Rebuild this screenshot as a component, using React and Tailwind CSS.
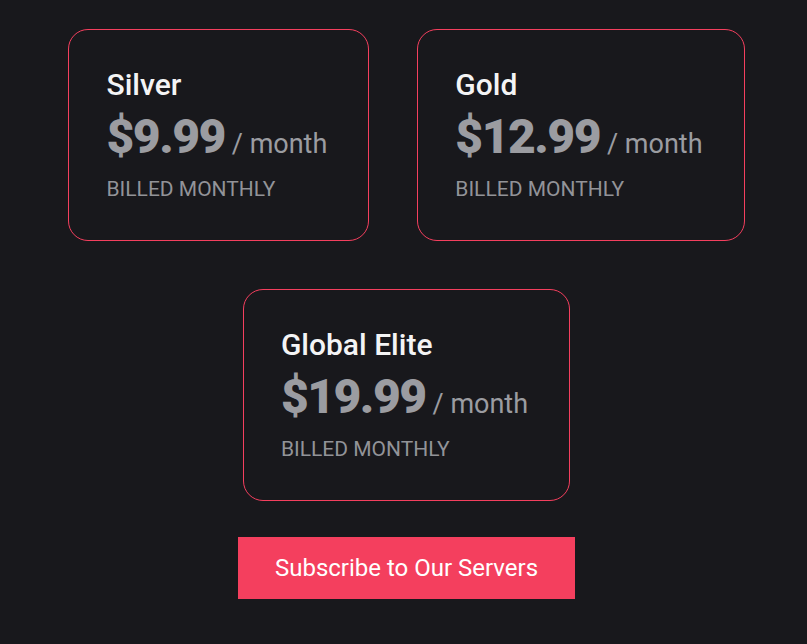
import React from 'react';

const plans = [
  {name: 'Silver', price: '$9.99'},
  {name: 'Gold', price: '$12.99'},
  {name: 'Global Elite', price: '$19.99'},
];

function PlanCard({name, price}) {
  return (
    <div className="rounded-[20px] border border-[#f43f5e] pl-[37px] pr-[41px] pt-[37px] pb-[37px]">
      <h3 className="text-[30px] leading-[36px] font-medium text-[#f4f4f5]">{name}</h3>
      <div className="mt-[10px] flex items-baseline whitespace-nowrap leading-[48px]">
        <span className="text-[48px] font-black tracking-[-1.5px] text-[#9b9ca1]">{price}</span>
        <span className="ml-[7px] text-[27px] text-[#9b9ca1]">/ month</span>
      </div>
      <p className="mt-[7px] text-[21px] leading-[28px] text-[#929398]">BILLED MONTHLY</p>
    </div>
  );
}

export default function App() {
  return (
    <div
      className="min-h-screen bg-[#18181c] flex flex-col items-center pt-[29px] pl-[6px]"
      style={{fontFamily: 'Roboto, "Noto Sans", sans-serif'}}
    >
      <div className="flex gap-[48px]">
        <PlanCard {...plans[0]}/>
        <PlanCard {...plans[1]}/>
      </div>
      <div className="mt-[48px]">
        <PlanCard {...plans[2]}/>
      </div>
      <button className="mt-[36px] h-[62px] px-[37px] bg-[#f43f5e] text-white text-[24px]">
        Subscribe to Our Servers
      </button>
    </div>
  );
}
